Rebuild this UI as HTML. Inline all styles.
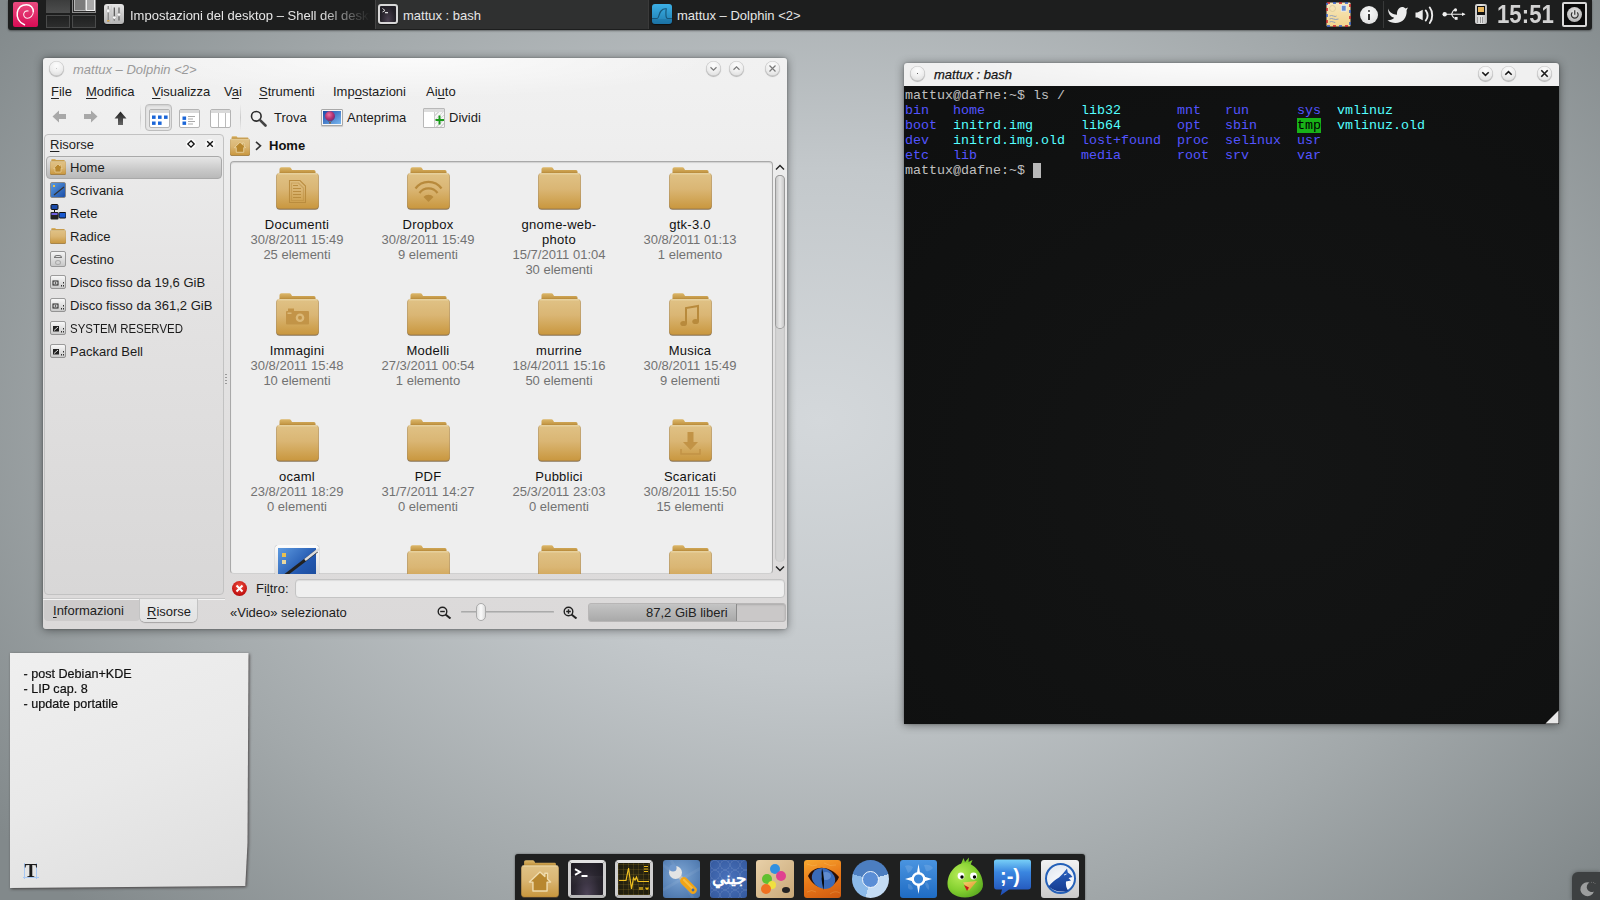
<!DOCTYPE html>
<html><head><meta charset="utf-8">
<style>
*{margin:0;padding:0;box-sizing:border-box}
html,body{width:1600px;height:900px;overflow:hidden}
body{position:relative;font-family:"Liberation Sans",sans-serif;font-size:13px;color:#222;
background:radial-gradient(ellipse 1000px 720px at 820px 420px,#d4d8db 0%,#c3c8cb 35%,#a2a8aa 70%,#82898b 100%);}
.a{position:absolute}
.t{position:absolute;white-space:nowrap;line-height:1}
/* panel */
#panel{left:8px;top:0;width:1584px;height:30px;background:#1d1e1e;border-radius:0 0 3px 3px;box-shadow:0 1px 2px rgba(0,0,0,.4)}
.ptxt{color:#e6e6e6;font-size:13px}
/* windows */
.win{position:absolute;background:#efefef;border-radius:3px 3px 2px 2px;box-shadow:0 1px 10px rgba(0,0,0,.45),0 0 2px rgba(0,0,0,.3)}
.wbtn{position:absolute;width:15px;height:15px;border-radius:50%;background:radial-gradient(circle at 50% 30%,#fdfdfd 0%,#f0f0f0 45%,#d6d6d6 100%);box-shadow:inset 0 0 0 .6px rgba(0,0,0,.18),0 .8px .8px rgba(0,0,0,.3)}
.menu span{position:absolute;top:0}
.m{color:#1c1c1c;line-height:15px}
.it{font-style:italic;line-height:15px}
.gi{position:absolute;width:120px;text-align:center;line-height:15px;color:#727272;white-space:nowrap}
.nm{color:#111;letter-spacing:.25px}
.di{position:absolute;top:6px;width:38px;height:38px;overflow:hidden}
.vic{position:absolute;width:21px;height:19px;border:1px solid #b4b4b4;border-radius:2px;background:#fff}
.vh{position:absolute;left:0;top:0;width:19px;height:3px;background:#dadada}
u{text-decoration:underline;text-decoration-thickness:1px;text-underline-offset:2px;text-decoration-color:#222}
</style></head><body>

<svg width="0" height="0" style="position:absolute">
<defs>
<linearGradient id="fb" x1="0" y1="0" x2="0" y2="1"><stop offset="0" stop-color="#e0c286"/><stop offset=".45" stop-color="#dab674"/><stop offset="1" stop-color="#c9973e"/></linearGradient>
<linearGradient id="ft" x1="0" y1="0" x2="0" y2="1"><stop offset="0" stop-color="#dcb76a"/><stop offset="1" stop-color="#b5842e"/></linearGradient>
<symbol id="folder" viewBox="0 0 43 43">
  <path d="M3.5 2 Q3.5 0.3 5.5 0.3 H13.5 Q15 0.3 15.5 2 L16 3 H38 Q39.5 3 39.5 4.5 V8 H3.5z" fill="url(#ft)"/>
  <rect x="0.3" y="6.8" width="42.4" height="36" rx="3.5" fill="#6a5030" opacity=".75"/>
  <rect x="0.3" y="6" width="42.4" height="35.8" rx="3.5" fill="url(#fb)" stroke="#9a7338" stroke-width=".4" stroke-opacity=".6"/>
  <rect x="1.5" y="6.3" width="40" height="1" fill="#f3e2b6" opacity=".8"/>
</symbol>
<symbol id="em-doc" viewBox="0 0 43 43"><g fill="none" stroke="#b88a3c" stroke-width="1.1" opacity=".9"><path d="M13.5 13.5 H24 L29.5 19 V35.5 H13.5z"/><path d="M15.5 16 H22.5 L27.5 21 V33.5 H15.5z" stroke-opacity=".5"/><path d="M17 21.5h8M17 24.5h8M17 27.5h8M17 30.5h8M17 18.5h5"/></g></symbol>
<symbol id="em-wifi" viewBox="0 0 43 43"><g fill="none" stroke="#b88a3c" stroke-width="2.2"><path d="M8.5 21.5 A16 16 0 0 1 34.5 21.5"/><path d="M12.5 26 A11 11 0 0 1 30.5 26"/></g><path d="M16.5 30 A6.5 6.5 0 0 1 26.5 30 L21.5 35z" fill="#b88a3c"/></symbol>
<symbol id="em-cam" viewBox="0 0 43 43"><g fill="#c29346" opacity=".95"><rect x="10" y="18" width="23" height="13.5" rx="1"/><rect x="12" y="15.5" width="6" height="3"/></g><circle cx="24" cy="24.8" r="4.3" fill="#dcb978"/><circle cx="24" cy="24.8" r="2" fill="#c29346"/><rect x="11.5" y="19.5" width="4" height="1.5" fill="#dcb978"/></symbol>
<symbol id="em-music" viewBox="0 0 43 43"><path d="M17 30.5 V15 L29 13 V28.5" fill="none" stroke="#b88a3c" stroke-width="2"/><ellipse cx="14.6" cy="30.5" rx="3.3" ry="2.6" fill="#b88a3c"/><ellipse cx="26.6" cy="28.5" rx="3.3" ry="2.6" fill="#b88a3c"/></symbol>
<symbol id="em-down" viewBox="0 0 43 43"><path d="M18.5 13 H24.5 V23 H29 L21.5 31 L14 23 H18.5z" fill="#c29346"/><path d="M12 30 V35 H31 V30" fill="none" stroke="#c29346" stroke-width="1.5"/></symbol>
<symbol id="em-home" viewBox="0 0 43 43"><path d="M21.5 13.5 L27 18.7 V15 H30 V21.5 L33.5 25 H29.5 V35 H13.5 V25 H9.5z" fill="#b8872e" stroke="#efdcae" stroke-width="1.6" stroke-linejoin="round"/></symbol>
<linearGradient id="blu" x1="0" y1="0" x2="1" y2="1"><stop offset="0" stop-color="#5d9ae0"/><stop offset="1" stop-color="#1c4fa8"/></linearGradient>
<linearGradient id="hdd" x1="0" y1="0" x2="0" y2="1"><stop offset="0" stop-color="#fafafa"/><stop offset="1" stop-color="#c8c8c8"/></linearGradient>
<symbol id="hdd16" viewBox="0 0 16 16"><rect x="0.5" y="2.5" width="15" height="13" rx="1.5" fill="url(#hdd)" stroke="#777" stroke-width=".7"/><rect x="3" y="8" width="5" height="4" fill="none" stroke="#222" stroke-width="1"/><circle cx="5.5" cy="10" r=".8" fill="#222"/><rect x="11" y="12" width="1" height="1.5" fill="#333"/><rect x="13" y="12" width="1" height="1.5" fill="#333"/><rect x="13" y="9" width="1" height="1.5" fill="#333"/></symbol>
<symbol id="ntfs16" viewBox="0 0 16 16"><rect x="0.5" y="2.5" width="15" height="13" rx="1.5" fill="url(#hdd)" stroke="#777" stroke-width=".7"/><rect x="3" y="7" width="6" height="5.5" fill="#222"/><path d="M4 11.5 L8 8" stroke="#ddd" stroke-width="1"/><rect x="11" y="12" width="1" height="1.5" fill="#333"/><rect x="13" y="12" width="1" height="1.5" fill="#333"/><rect x="13" y="9" width="1" height="1.5" fill="#333"/></symbol>
</defs></svg>
<!-- PANEL -->
<div id="panel" class="a">
  <!-- debian -->
  <div class="a" style="left:5px;top:2px;width:25px;height:25px;border-radius:2px;background:linear-gradient(#ea4c80,#d80c55)">
    <svg class="a" style="left:0;top:0" width="25" height="25" viewBox="0 0 25 25"><path d="M11.5 22.8 C5.5 20.5 3.5 15 4.3 10.5 C5.3 5 9.5 2.7 13.5 2.7 C17.8 2.7 20.3 6 20.3 9.5" fill="none" stroke="#fff" stroke-width="1.5" stroke-linecap="round"/><path d="M20.3 9.5 C20.3 13.5 17.5 16.5 14 16.2 C11.5 16 10.2 13.5 10.8 11.3 C11.4 9.5 13.2 8.6 15.2 9" fill="none" stroke="#fff" stroke-width="1.05" stroke-linecap="round" opacity=".9"/></svg>
  </div>
  <!-- pager -->
  <div class="a" style="left:38px;top:0;width:24px;height:13px;background:linear-gradient(#3c3d3d,#4d4e4e);"></div>
  <div class="a" style="left:64px;top:0;width:24px;height:13px;border:1px solid #8a8a8a;border-top:0;background:#2a2a2a">
    <div class="a" style="left:1px;top:0;width:12px;height:11px;background:#7c7c7c;border:1px solid #b5b5b5;border-top:0"></div>
    <div class="a" style="left:13px;top:0;width:9px;height:11px;background:#a9a9a9;border:1px solid #f0f0f0;border-top:0"></div>
  </div>
  <div class="a" style="left:38px;top:15px;width:24px;height:13px;border:1px solid #4a4b4b;background:linear-gradient(#202121,#2c2d2d)"></div>
  <div class="a" style="left:64px;top:15px;width:24px;height:13px;border:1px solid #4a4b4b;background:linear-gradient(#202121,#2c2d2d)"></div>
  <!-- task 1 -->
  <div class="a" style="left:96px;top:4px;width:20px;height:20px;border-radius:3px;background:linear-gradient(#e6e6e6,#b4b4b4);box-shadow:0 1px 1px rgba(0,0,0,.5)">
    <svg class="a" width="20" height="20" viewBox="0 0 20 20"><line x1="7.3" y1="1.5" x2="7.3" y2="18.5" stroke="#c4c4c4" stroke-width=".6"/><g stroke-width="1.1"><line x1="4.2" y1="2" x2="4.2" y2="18" stroke="#777"/><line x1="10.3" y1="3.5" x2="10.3" y2="16.5" stroke="#4a4a4a"/><line x1="15" y1="3.5" x2="15" y2="16.5" stroke="#5a5a5a"/></g><g fill="#fafafa" stroke="#9a9a9a" stroke-width=".4"><rect x="2.6" y="5.2" width="3.2" height="3.2" rx=".6"/><path d="M8.5 12.3 h3.6 v1.4 l-1.8 1.8 l-1.8 -1.8z"/><path d="M13.2 9.3 h3.6 v1.4 l-1.8 1.8 l-1.8 -1.8z"/></g><rect x="3" y="16" width="2.5" height="1.5" fill="#d8a850"/></svg>
  </div>
  <div class="t ptxt" style="left:122px;top:9px;width:240px;overflow:hidden;-webkit-mask-image:linear-gradient(90deg,#000 190px,transparent 240px)">Impostazioni del desktop – Shell del desktop</div>
  <!-- task 2 active -->
  <div class="a" style="left:367px;top:0;width:274px;height:29px;background:#2f3030;border-left:1px solid #444;border-right:1px solid #3a3a3a"></div>
  <div class="a" style="left:370px;top:4px;width:20px;height:20px;border-radius:3px;border:2px solid #d8d8d8;background:radial-gradient(ellipse at 50% 90%,#4a4050,#221f26 70%);box-shadow:0 1px 1px rgba(0,0,0,.6)">
    <svg class="a" style="left:0;top:0" width="16" height="16" viewBox="0 0 16 16"><path d="M2.5 2.5 L5 4.5 L2.5 6" fill="none" stroke="#ddd" stroke-width="1"/><rect x="5" y="6" width="3" height="1.3" fill="#ddd"/></svg>
  </div>
  <div class="t ptxt" style="left:395px;top:9px">mattux : bash</div>
  <!-- task 3 -->
  <div class="a" style="left:644px;top:4px;width:20px;height:20px;border-radius:3px;background:linear-gradient(#3cb0e6,#1f7db0);box-shadow:0 1px 1px rgba(0,0,0,.5)">
    <svg class="a" width="20" height="20" viewBox="0 0 20 20"><path d="M0 14.5 H5.2 C6.8 14.5 6.8 9.5 9 7 C10.5 5.2 12.5 4.6 14.2 4.8 C13.7 9 13.6 14.5 15.5 14.5 H20" fill="none" stroke="#17587c" stroke-width="1.2"/><rect x="0" y="15" width="20" height="5" fill="rgba(0,40,80,.12)"/></svg>
  </div>
  <div class="t ptxt" style="left:669px;top:9px">mattux – Dolphin &lt;2&gt;</div>
  <!-- tray -->
  <svg class="a" style="left:1318px;top:2px" width="25" height="25" viewBox="0 0 25 25"><defs><linearGradient id="env" x1="0" y1="0" x2="0" y2="1"><stop offset="0" stop-color="#f7e8c0"/><stop offset="1" stop-color="#f2d48c"/></linearGradient></defs><rect x="0.5" y="0.5" width="24" height="24" rx="1" fill="url(#env)"/><rect x="1" y="1" width="23" height="23" fill="none" stroke="#c81e2a" stroke-width="1.5" stroke-dasharray="3 9"/><rect x="1" y="1" width="23" height="23" fill="none" stroke="#2a58c8" stroke-width="1.5" stroke-dasharray="3 9" stroke-dashoffset="6"/><rect x="15" y="3" width="5.5" height="6.5" fill="#e8eef8"/><rect x="15.8" y="3.8" width="3.9" height="4.9" fill="#6a8ed0"/><circle cx="6.5" cy="6.5" r="3" fill="none" stroke="#d8c898" stroke-width=".8"/><g stroke="#7890c0" stroke-width=".8" fill="none"><path d="M3.5 14 q2 -1 4 0 t3 0"/><path d="M3.5 17 q2 -1 4 0 t5 0"/><path d="M3.5 20 q2 -1 4 0 t2 0"/></g></svg>
  <div class="a" style="left:1352px;top:6px;width:18px;height:18px;border-radius:50%;background:radial-gradient(circle at 50% 40%,#fafafa,#d8d8d8)">
    <div class="a" style="left:8px;top:4px;width:2.2px;height:2.2px;background:#333;border-radius:1px"></div>
    <div class="a" style="left:8px;top:7.5px;width:2.2px;height:6.5px;background:#333"></div>
  </div>
  <div class="a" style="left:1375px;top:1px;width:1px;height:27px;background:#383939"></div>
  <svg class="a" style="left:1379px;top:6px" width="22" height="18" viewBox="0 0 22 18"><path d="M1 2.5 C2.5 6.5 6 8.5 10 8.7 C9.7 4.8 11.8 1 15 1 C16.6 1 17.8 1.7 18.5 2.5 L21 1.5 L19.6 4.2 C20.3 11.5 15.5 17 8.5 17 C5.5 17 2.5 16 0.5 14.3 C3.5 14.5 6 13.3 7.2 11.8 C3.5 11 1 7.5 1 2.5z" fill="#ececec"/></svg>
  <svg class="a" style="left:1406px;top:6px" width="20" height="18" viewBox="0 0 20 18"><path d="M1.5 6.5 H3.5 L8.7 3.7 V14.3 L3.5 11.5 H1.5z" fill="#ececec"/><path d="M11.8 4.5 C14 7.5 14 11.5 11.8 14.5 M15.8 1.5 C19 5.5 19 13 15.8 17" fill="none" stroke="#ececec" stroke-width="1.9" stroke-linecap="round"/></svg>
  <svg class="a" style="left:1434px;top:8px" width="24" height="14" viewBox="0 0 24 14"><circle cx="2.7" cy="6.3" r="2.2" fill="#f0f0f0"/><path d="M2.7 6.3 H22.5 M9 6.3 C10.5 6.3 10.5 1.8 12.5 1.8 M9 6.3 C10.5 6.3 10.5 10.3 13 10.3" stroke="#f0f0f0" stroke-width="1.1" fill="none"/><path d="M20 4.5 L23.5 6.3 L20 8z" fill="#f0f0f0"/><circle cx="13.5" cy="1.9" r="1.6" fill="#f0f0f0"/><rect x="12.8" y="9" width="2.8" height="2.8" fill="#f0f0f0"/></svg>
  <div class="a" style="left:1467px;top:4px;width:12px;height:20px;border-radius:2px;background:linear-gradient(90deg,#c8c8c8,#e8e8e8,#b8b8b8);box-shadow:0 1px 1px rgba(0,0,0,.5)">
    <div class="a" style="left:2px;top:2px;width:8px;height:9px;background:#111"><div class="a" style="left:1px;top:1px;width:6px;height:4.5px;background:#eab860"></div></div>
    <div class="a" style="left:2px;top:13px;width:8px;height:6px;background:repeating-linear-gradient(90deg,#999 0 1px,transparent 1px 2.7px)"></div>
  </div>
  <div class="t" style="left:1489px;top:1px;font-size:26px;font-weight:bold;color:#d2d2d2;transform:scaleX(0.855);transform-origin:0 0;line-height:26px">15:51</div>
  <div class="a" style="left:1554px;top:2px;width:25px;height:25px;border:2px solid #d9d9d9;border-radius:2px;background:#0a0a0a">
    <div class="a" style="left:2.8px;top:2.5px;width:15.5px;height:15.5px;border-radius:50%;background:radial-gradient(circle at 50% 35%,#e4e4e4,#a8a8a8)">
      <svg class="a" width="15.5" height="15.5" viewBox="-.75 -.75 15.5 15.5"><path d="M4.6 4.6 A3.4 3.4 0 1 0 9.4 4.6" fill="none" stroke="#333" stroke-width="1.2"/><line x1="7" y1="2.5" x2="7" y2="7" stroke="#333" stroke-width="1.2"/></svg>
    </div>
  </div>
</div>

<!-- DOLPHIN -->
<div class="win" id="dol" style="left:43px;top:58px;width:744px;height:571px;border-radius:3px;background:linear-gradient(#f1f1f1 0,#eeeeee 90px,#e3e2e2 300px,#dbd9d9 571px)">
  <div class="a" style="left:0;top:0;width:744px;height:40px;background:radial-gradient(ellipse 300px 40px at 372px 0,rgba(255,255,255,.7),rgba(255,255,255,0))"></div>
  <div class="wbtn" style="left:6px;top:3px"><div class="a" style="left:7px;top:7px;width:1.4px;height:1.4px;background:#bbb;border-radius:1px"></div></div>
  <div class="t it" style="left:30px;top:4px;color:#9a9a9a">mattux – Dolphin &lt;2&gt;</div>
  <div class="wbtn" style="left:663px;top:3px"><svg class="a" width="15" height="15"><path d="M4.5 6.3 L7.5 9.2 L10.5 6.3" fill="none" stroke="#7a7a7a" stroke-width="1.2"/></svg></div>
  <div class="wbtn" style="left:686px;top:3px"><svg class="a" width="15" height="15"><path d="M4.5 8.7 L7.5 5.8 L10.5 8.7" fill="none" stroke="#7a7a7a" stroke-width="1.2"/></svg></div>
  <div class="wbtn" style="left:722px;top:3px"><svg class="a" width="15" height="15"><path d="M4.5 4.5 L10.5 10.5 M10.5 4.5 L4.5 10.5" fill="none" stroke="#7a7a7a" stroke-width="1.2"/></svg></div>
  <!-- menu -->
  <div class="t m" style="left:8px;top:26px"><u>F</u>ile</div>
  <div class="t m" style="left:43px;top:26px"><u>M</u>odifica</div>
  <div class="t m" style="left:109px;top:26px"><u>V</u>isualizza</div>
  <div class="t m" style="left:181px;top:26px">V<u>a</u>i</div>
  <div class="t m" style="left:216px;top:26px"><u>S</u>trumenti</div>
  <div class="t m" style="left:290px;top:26px">Imp<u>o</u>stazioni</div>
  <div class="t m" style="left:383px;top:26px">Ai<u>u</u>to</div>
  <!-- toolbar -->
  <svg class="a" style="left:9px;top:52px" width="15" height="13"><path d="M0.5 6.5 L7 0.5 V4 H14 V9 H7 V12.5z" fill="#a8a8a8"/></svg>
  <svg class="a" style="left:40px;top:52px" width="15" height="13"><path d="M14.5 6.5 L8 0.5 V4 H1 V9 H8 V12.5z" fill="#a8a8a8"/></svg>
  <svg class="a" style="left:71px;top:53px" width="13" height="15"><defs><linearGradient id="ug" x1="0" y1="0" x2="0" y2="1"><stop offset="0" stop-color="#222"/><stop offset="1" stop-color="#666"/></linearGradient></defs><path d="M6.5 0.5 L12.5 7.5 H9 V14 H4 V7.5 H0.5z" fill="url(#ug)"/></svg>
  <div class="a" style="left:97px;top:46px;width:1px;height:27px;background:linear-gradient(rgba(0,0,0,0),rgba(0,0,0,.15),rgba(0,0,0,0))"></div>
  <div class="a" style="left:102px;top:46px;width:27px;height:27px;border-radius:4px;border:1px solid #bdbdbd;background:#e6e6e6;box-shadow:inset 0 1px 2px rgba(0,0,0,.1)"></div>
  <div class="vic" style="left:106px;top:51px"><div class="vh"></div>
    <svg class="a" style="left:0;top:0" width="21" height="19"><g fill="#1b66d8"><rect x="2" y="5.5" width="3.6" height="3.4"/><rect x="8" y="5.5" width="3.6" height="3.4"/><rect x="14" y="5.5" width="3.6" height="3.4"/><rect x="2" y="11.5" width="3.6" height="3.4"/><rect x="8" y="11.5" width="3.6" height="3.4"/></g></svg></div>
  <div class="vic" style="left:136px;top:51px"><div class="vh"></div>
    <svg class="a" style="left:0;top:0" width="21" height="19"><g fill="#1b66d8"><rect x="2.5" y="6.5" width="3.6" height="3.4"/><rect x="2.5" y="11.5" width="3.6" height="3.4"/></g><g fill="#aaa"><rect x="8" y="6" width="7" height="1"/><rect x="8" y="8.5" width="5" height="1"/><rect x="8" y="11" width="7" height="1"/><rect x="8" y="13.5" width="5" height="1"/></g></svg></div>
  <div class="vic" style="left:167px;top:51px"><div class="vh"></div>
    <div class="a" style="left:7px;top:3px;width:1px;height:14px;background:#bbb"></div><div class="a" style="left:14px;top:3px;width:1px;height:14px;background:#bbb"></div></div>
  <div class="a" style="left:197px;top:46px;width:1px;height:27px;background:linear-gradient(rgba(0,0,0,0),rgba(0,0,0,.15),rgba(0,0,0,0))"></div>
  <svg class="a" style="left:207px;top:52px" width="18" height="17"><circle cx="6.3" cy="6.3" r="4.8" fill="none" stroke="#2a2a2a" stroke-width="1.6"/><path d="M9.8 9.8 L15.5 15.5" stroke="#444" stroke-width="2.6" stroke-linecap="round"/></svg>
  <div class="t m" style="left:231px;top:52px">Trova</div>
  <div class="a" style="left:278px;top:51px;width:22px;height:17px;border:1px solid #a8a8a8;border-radius:1px;background:#f8f8f8;box-shadow:0 1px 1px rgba(0,0,0,.15)">
    <svg class="a" style="left:1px;top:1px" width="18" height="13"><defs><linearGradient id="sky" x1="0" y1="0" x2="1" y2="1"><stop offset="0" stop-color="#1a4aa8"/><stop offset="1" stop-color="#7ab8f0"/></linearGradient><radialGradient id="bal" cx=".4" cy=".35" r=".7"><stop offset="0" stop-color="#f070a0"/><stop offset=".6" stop-color="#b03070"/><stop offset="1" stop-color="#603080"/></radialGradient></defs><rect width="18" height="13" fill="url(#sky)"/><ellipse cx="7" cy="5.3" rx="5" ry="5" fill="url(#bal)"/><path d="M5 9.5 L6.3 11 M9 9.5 L7.7 11" stroke="#444" stroke-width=".6"/><rect x="6.2" y="11" width="1.6" height="1.6" fill="#7a5a30"/></svg></div>
  <div class="t m" style="left:304px;top:52px">Anteprima</div>
  <div class="a" style="left:380px;top:50px;width:22px;height:20px;border:1px solid #b8b8b8;background:linear-gradient(90deg,#fff 50%,transparent 50%),repeating-linear-gradient(135deg,#d8d8d8 0 1px,#f6f6f6 1px 3px);border-radius:1px">
    <div class="a" style="left:0;top:0;width:20px;height:3px;background:#ddd"></div><div class="a" style="left:10px;top:3px;width:1px;height:15px;background:#ccc"></div>
    <svg class="a" style="left:11px;top:6px" width="10" height="10"><path d="M4.5 0.5 V9.5 M0.5 5 H9" stroke="#1a9a1a" stroke-width="2"/></svg></div>
  <div class="t m" style="left:406px;top:52px">Dividi</div>
  <!-- places -->
  <div class="a" style="left:1px;top:76px;width:180px;height:461px;border:1px solid #c2c2c2;border-radius:4px;background:linear-gradient(#ececec,#e4e3e3 150px,#d8d7d7)"></div>
  <div class="t m" style="left:7px;top:79px"><u>R</u>isorse</div>
  <div class="a" style="left:143px;top:81px;width:10px;height:10px;border-radius:50%;background:#fafafa"><svg class="a" width="10" height="10"><path d="M5 1.8 L8.2 5 L5 8.2 L1.8 5z" fill="none" stroke="#111" stroke-width="1.3"/></svg></div>
  <div class="a" style="left:162px;top:81px;width:10px;height:10px;border-radius:50%;background:#fafafa"><svg class="a" width="10" height="10"><path d="M2.2 2.2 L7.8 7.8 M7.8 2.2 L2.2 7.8" fill="none" stroke="#111" stroke-width="1.4"/></svg></div>
  <div class="a" style="left:3px;top:98px;width:176px;height:23px;border-radius:4px;border:1px solid #a9a9a9;background:linear-gradient(#e6e6e6,#c9c9c9 60%,#b9b9b9)"></div>
  <svg class="a" style="left:7px;top:101px" width="16" height="16" viewBox="0 0 43 43"><use href="#folder"/><use href="#em-home"/></svg>
  <div class="a" style="left:7px;top:124px;width:16px;height:16px;border-radius:2px;border:1px solid #888;background:linear-gradient(135deg,#5a9ae0,#1c4fa8)"><div class="a" style="left:2px;top:2px;width:2px;height:2px;background:#e8c050"></div><svg class="a" width="16" height="16"><path d="M3 12 L13 4" stroke="#333" stroke-width="1.3"/></svg></div>
  <svg class="a" style="left:7px;top:146px" width="16" height="16"><rect x="1" y="0.5" width="7" height="5" rx="1" fill="#1a4aa8" stroke="#111"/><rect x="0.5" y="8" width="8" height="7.5" rx="1" fill="#222"/><rect x="1.5" y="9" width="6" height="2" fill="#7060e0"/><rect x="9" y="8.5" width="7" height="5.5" rx="1" fill="#1a5ad0" stroke="#111"/><rect x="4" y="5.5" width="1" height="2.5" fill="#111"/></svg>
  <svg class="a" style="left:7px;top:170px" width="16" height="16" viewBox="0 0 43 43"><use href="#folder"/></svg>
  <div class="a" style="left:7px;top:193px;width:16px;height:16px;border-radius:2px;border:1px solid #999;background:linear-gradient(#f4f4f4,#c8c8c8)"><div class="a" style="left:3px;top:3px;width:8px;height:3px;border:1px solid #777;border-radius:4px 4px 0 0"></div><div class="a" style="left:4px;top:8px;width:6px;height:5px;border-radius:50%;border:1px solid #aaa"></div></div>
  <svg class="a" style="left:7px;top:215px" width="16" height="16"><use href="#hdd16"/></svg>
  <svg class="a" style="left:7px;top:238px" width="16" height="16"><use href="#hdd16"/></svg>
  <svg class="a" style="left:7px;top:261px" width="16" height="16"><use href="#ntfs16"/></svg>
  <svg class="a" style="left:7px;top:284px" width="16" height="16"><use href="#ntfs16"/></svg>
  <div class="t m" style="left:27px;top:102px">Home</div>
  <div class="t m" style="left:27px;top:125px">Scrivania</div>
  <div class="t m" style="left:27px;top:148px">Rete</div>
  <div class="t m" style="left:27px;top:171px">Radice</div>
  <div class="t m" style="left:27px;top:194px">Cestino</div>
  <div class="t m" style="left:27px;top:217px">Disco fisso da 19,6 GiB</div>
  <div class="t m" style="left:27px;top:240px">Disco fisso da 361,2 GiB</div>
  <div class="t m" style="left:27px;top:263px;transform:scaleX(.88);transform-origin:0 0">SYSTEM RESERVED</div>
  <div class="t m" style="left:27px;top:286px">Packard Bell</div>
  <div class="a" style="left:182px;top:316px;width:2px;height:12px;background:repeating-linear-gradient(#999 0 1px,transparent 1px 3px)"></div>
  <!-- breadcrumb -->
  <svg class="a" style="left:187px;top:78px" width="20" height="20" viewBox="0 0 43 43"><use href="#folder"/><use href="#em-home"/></svg>
  <svg class="a" style="left:212px;top:83px" width="7" height="10"><path d="M1 0.8 L5.5 4.8 L1 8.8" fill="none" stroke="#333" stroke-width="1.6"/></svg>
  <div class="t m" style="left:226px;top:80px;font-weight:bold;color:#111">Home</div>
  <!-- view -->
  <div class="a" style="left:187px;top:103px;width:543px;height:413px;border:1px solid #a9a9a9;border-bottom-color:#d0d0d0;border-radius:4px;background:#eeeeee;box-shadow:inset 0 1px 1px rgba(0,0,0,.12);overflow:hidden"></div>
  <div class="a" style="left:0;top:0;width:744px;height:571px">
  <svg class="a" style="left:232.5px;top:109px" width="43" height="43"><use href="#folder"/><use href="#em-doc"/></svg><div class="gi" style="left:194px;top:159px"><span class="nm">Documenti</span><br>30/8/2011 15:49<br>25 elementi</div>
<svg class="a" style="left:363.5px;top:109px" width="43" height="43"><use href="#folder"/><use href="#em-wifi"/></svg><div class="gi" style="left:325px;top:159px"><span class="nm">Dropbox</span><br>30/8/2011 15:49<br>9 elementi</div>
<svg class="a" style="left:494.5px;top:109px" width="43" height="43"><use href="#folder"/></svg><div class="gi" style="left:456px;top:159px"><span class="nm">gnome-web-</span><br><span class="nm">photo</span><br>15/7/2011 01:04<br>30 elementi</div>
<svg class="a" style="left:625.5px;top:109px" width="43" height="43"><use href="#folder"/></svg><div class="gi" style="left:587px;top:159px"><span class="nm">gtk-3.0</span><br>30/8/2011 01:13<br>1 elemento</div>
<svg class="a" style="left:232.5px;top:235px" width="43" height="43"><use href="#folder"/><use href="#em-cam"/></svg><div class="gi" style="left:194px;top:285px"><span class="nm">Immagini</span><br>30/8/2011 15:48<br>10 elementi</div>
<svg class="a" style="left:363.5px;top:235px" width="43" height="43"><use href="#folder"/></svg><div class="gi" style="left:325px;top:285px"><span class="nm">Modelli</span><br>27/3/2011 00:54<br>1 elemento</div>
<svg class="a" style="left:494.5px;top:235px" width="43" height="43"><use href="#folder"/></svg><div class="gi" style="left:456px;top:285px"><span class="nm">murrine</span><br>18/4/2011 15:16<br>50 elementi</div>
<svg class="a" style="left:625.5px;top:235px" width="43" height="43"><use href="#folder"/><use href="#em-music"/></svg><div class="gi" style="left:587px;top:285px"><span class="nm">Musica</span><br>30/8/2011 15:49<br>9 elementi</div>
<svg class="a" style="left:232.5px;top:361px" width="43" height="43"><use href="#folder"/></svg><div class="gi" style="left:194px;top:411px"><span class="nm">ocaml</span><br>23/8/2011 18:29<br>0 elementi</div>
<svg class="a" style="left:363.5px;top:361px" width="43" height="43"><use href="#folder"/></svg><div class="gi" style="left:325px;top:411px"><span class="nm">PDF</span><br>31/7/2011 14:27<br>0 elementi</div>
<svg class="a" style="left:494.5px;top:361px" width="43" height="43"><use href="#folder"/></svg><div class="gi" style="left:456px;top:411px"><span class="nm">Pubblici</span><br>25/3/2011 23:03<br>0 elementi</div>
<svg class="a" style="left:625.5px;top:361px" width="43" height="43"><use href="#folder"/><use href="#em-down"/></svg><div class="gi" style="left:587px;top:411px"><span class="nm">Scaricati</span><br>30/8/2011 15:50<br>15 elementi</div>
<div class="a" style="left:0;top:487px;width:742px;height:29px;overflow:hidden"><div class="a" style="left:232px;top:0;width:44px;height:40px;border-radius:4px;background:linear-gradient(#fdfdfd,#d0d0d0);box-shadow:0 0 1px rgba(0,0,0,.6)">
<div class="a" style="left:3px;top:3px;width:38px;height:34px;background:linear-gradient(135deg,#5e9be0,#2358b0 60%,#1a4a98)"><div class="a" style="left:4px;top:5px;width:4px;height:4px;background:#e8c050"></div><div class="a" style="left:4px;top:12px;width:4px;height:4px;background:#e8d8a0"></div></div>
<svg class="a" style="left:0;top:0" width="50" height="40"><path d="M8 32 L42 6" stroke="#222" stroke-width="3"/><path d="M30 15 L44 4" stroke="#ddd" stroke-width="2.5"/></svg></div><svg class="a" style="left:363.5px;top:0px" width="43" height="43"><use href="#folder"/></svg><svg class="a" style="left:494.5px;top:0px" width="43" height="43"><use href="#folder"/></svg><svg class="a" style="left:625.5px;top:0px" width="43" height="43"><use href="#folder"/></svg></div>
  </div>
  <!-- scrollbar -->
  <svg class="a" style="left:732px;top:106px" width="10" height="7"><path d="M1 5.5 L5 1.5 L9 5.5" fill="none" stroke="#222" stroke-width="1.4"/></svg>
  <div class="a" style="left:732px;top:117px;width:10px;height:387px;border-radius:5px;background:#d4d4d4;box-shadow:inset 0 1px 2px rgba(0,0,0,.25)"></div>
  <div class="a" style="left:733px;top:118px;width:8px;height:152px;border-radius:4px;background:linear-gradient(90deg,#c8c8c8,#e8e8e8,#c8c8c8);box-shadow:0 0 0 1px #9a9a9a"></div>
  <svg class="a" style="left:732px;top:507px" width="10" height="7"><path d="M1 1.5 L5 5.5 L9 1.5" fill="none" stroke="#222" stroke-width="1.4"/></svg>
  <!-- filter -->
  <div class="a" style="left:189px;top:523px;width:15px;height:15px;border-radius:50%;background:radial-gradient(circle at 50% 35%,#f05040,#c01010 70%,#901010)"><svg class="a" width="15" height="15"><path d="M4.5 4.5 L10.5 10.5 M10.5 4.5 L4.5 10.5" stroke="#fff" stroke-width="2"/></svg></div>
  <div class="t m" style="left:213px;top:523px">Fi<u>l</u>tro:</div>
  <div class="a" style="left:252px;top:521px;width:490px;height:19px;border-radius:4px;border:1px solid #c4c4c4;background:#efefef;box-shadow:inset 0 1px 1px rgba(0,0,0,.08)"></div>
  <!-- status -->
  <div class="t m" style="left:187px;top:547px">«Video» selezionato</div>
  <svg class="a" style="left:394px;top:548px" width="16" height="13"><circle cx="5.5" cy="5.5" r="4.3" fill="none" stroke="#222" stroke-width="1.4"/><path d="M3.2 5.5 H7.8" stroke="#222" stroke-width="1.4"/><path d="M8.5 8.5 L13.5 12.5" stroke="#222" stroke-width="2"/></svg>
  <div class="a" style="left:418px;top:553px;width:93px;height:2px;border-radius:1px;background:#c0c0c0;box-shadow:inset 0 1px 0 #aaa"></div>
  <div class="a" style="left:433px;top:545px;width:10px;height:18px;border-radius:5px;border:1px solid #aaa;background:linear-gradient(90deg,#e0e0e0,#fafafa,#dcdcdc)"></div>
  <svg class="a" style="left:520px;top:548px" width="16" height="13"><circle cx="5.5" cy="5.5" r="4.3" fill="none" stroke="#222" stroke-width="1.4"/><path d="M3.2 5.5 H7.8 M5.5 3.2 V7.8" stroke="#222" stroke-width="1.4"/><path d="M8.5 8.5 L13.5 12.5" stroke="#222" stroke-width="2"/></svg>
  <div class="a" style="left:545px;top:545px;width:198px;height:19px;border-radius:3px;border:1px solid #b8b6b6;background:#cac8c8;box-shadow:inset 0 1px 2px rgba(0,0,0,.15);overflow:hidden">
    <div class="a" style="left:0;top:0;width:148px;height:17px;background:linear-gradient(#c4c4c4,#a9a9a9);border-right:1px solid #8a8a8a"></div></div>
  <div class="t m" style="left:603px;top:547px;color:#222">87,2 GiB liberi</div>
  <!-- tabs -->
  <div class="a" style="left:0;top:541px;width:182px;height:1px;background:#f4f4f4;box-shadow:0 -1px 0 #c8c8c8"></div>
  <div class="a" style="left:1px;top:542px;width:96px;height:21px;border-radius:0 0 4px 4px;background:#cdcbcb"></div>
  <div class="a" style="left:97px;top:541px;width:57px;height:23px;border-radius:0 0 5px 5px;background:linear-gradient(#eaeaea,#e2e2e2);box-shadow:0 1px 1px rgba(0,0,0,.25),-1px 0 0 #c8c8c8,1px 0 0 #c8c8c8"></div>
  <div class="t m" style="left:10px;top:545px"><u>I</u>nformazioni</div>
  <div class="t m" style="left:104px;top:546px"><u>R</u>isorse</div>
</div>

<!-- TERMINAL -->
<div class="win" style="left:904px;top:63px;width:655px;height:661px;background:#f0f0f0;border-radius:3px 3px 0 0">
  <div class="a" style="left:0;top:0;width:655px;height:23px;background:radial-gradient(ellipse 300px 30px at 327px 0,rgba(255,255,255,.8),rgba(255,255,255,0))"></div>
  <div class="wbtn" style="left:6px;top:3px"><div class="a" style="left:7px;top:7px;width:1.4px;height:1.4px;background:#333;border-radius:1px"></div></div>
  <div class="t it" style="left:30px;top:4px;color:#151515;-webkit-text-stroke:.25px #151515">mattux : bash</div>
  <div class="wbtn" style="left:574px;top:3px"><svg class="a" width="15" height="15"><path d="M4.3 6.2 L7.5 9.3 L10.7 6.2" fill="none" stroke="#1a1a1a" stroke-width="1.6"/></svg></div>
  <div class="wbtn" style="left:597px;top:3px"><svg class="a" width="15" height="15"><path d="M4.3 8.8 L7.5 5.7 L10.7 8.8" fill="none" stroke="#1a1a1a" stroke-width="1.6"/></svg></div>
  <div class="wbtn" style="left:633px;top:3px"><svg class="a" width="15" height="15"><path d="M4.3 4.3 L10.7 10.7 M10.7 4.3 L4.3 10.7" fill="none" stroke="#1a1a1a" stroke-width="1.6"/></svg></div>
  <div class="a" style="left:0;top:23px;width:655px;height:638px;background:radial-gradient(ellipse 500px 450px at 55% 60%,#141515,#0f1010);overflow:hidden">
    <pre class="a" style="left:1px;top:2px;font-family:'Liberation Mono',monospace;font-size:13.333px;line-height:15px;color:#c0c0c0"><span style="color:#c0c0c0">mattux@dafne:~$ ls /</span>
<span style="color:#5454ff">bin</span>   <span style="color:#5454ff">home</span>            <span style="color:#54ffff">lib32</span>       <span style="color:#5454ff">mnt</span>   <span style="color:#5454ff">run</span>      <span style="color:#5454ff">sys</span>  <span style="color:#54ffff">vmlinuz</span>
<span style="color:#5454ff">boot</span>  <span style="color:#54ffff">initrd.img</span>      <span style="color:#54ffff">lib64</span>       <span style="color:#5454ff">opt</span>   <span style="color:#5454ff">sbin</span>     <span style="background:#18b218;color:#000">tmp</span>  <span style="color:#54ffff">vmlinuz.old</span>
<span style="color:#5454ff">dev</span>   <span style="color:#54ffff">initrd.img.old</span>  <span style="color:#5454ff">lost+found</span>  <span style="color:#5454ff">proc</span>  <span style="color:#5454ff">selinux</span>  <span style="color:#5454ff">usr</span>
<span style="color:#5454ff">etc</span>   <span style="color:#5454ff">lib</span>             <span style="color:#5454ff">media</span>       <span style="color:#5454ff">root</span>  <span style="color:#5454ff">srv</span>      <span style="color:#5454ff">var</span>
<span style="color:#c0c0c0">mattux@dafne:~$ </span><span style="background:#b8b8b8">&nbsp;</span></pre>
    <svg class="a" style="left:641px;top:624px" width="14" height="14"><path d="M13.5 0.5 V13.5 H0.5z" fill="#e8e8e8"/></svg>
  </div>
</div>

<!-- NOTE -->
<div class="a" style="left:0;top:640px;width:270px;height:260px;filter:drop-shadow(1px 1px 1.5px rgba(40,30,30,.7))"><div class="a" style="left:10px;top:13px;width:239px;height:235px;clip-path:polygon(0 0,238.5px 0,237.5px 190px,235.3px 233px,0 235px);background:linear-gradient(160deg,#efefef 0%,#e9e9e9 50%,#dedede 100%)">
  <div class="t" style="left:13.5px;top:14.2px;font-size:12.6px;line-height:15px;color:#111;-webkit-text-stroke:.2px #111">- post Debian+KDE<br>- LIP cap. 8<br>- update portatile</div>
  <div class="a" style="left:14px;top:210px;width:13px;height:16px;border:1px solid #a8c8f4;border-top:0;border-bottom:0"></div>
  <div class="a" style="left:13px;top:224px;width:16px;height:1px;background:#a8c8f4"></div>
  <div class="t" style="left:14.5px;top:208.7px;font-family:'Liberation Serif',serif;font-weight:bold;font-size:19px;line-height:18px;color:#1a1a1a">T</div>
</div></div>

<!-- DOCK -->
<div class="a" style="left:515px;top:854px;width:570px;height:46px;background:#1f2020;border-radius:3px 3px 0 0;box-shadow:0 0 2px rgba(0,0,0,.5)">
  <!-- home folder -->
  <svg class="a" style="left:6px;top:6px" width="38" height="38" viewBox="0 0 43 43"><use href="#folder"/><use href="#em-home"/></svg>
  <!-- terminal -->
  <div class="di" style="left:53px;border:3px solid #d2d2d2;border-color:#e2e2e2 #cfcfcf #b8b8b8;background:radial-gradient(ellipse at 50% 100%,#4e4458,#2a2630 55%,#1c1a20);border-radius:4px;box-shadow:0 1px 1px rgba(0,0,0,.6)"><div class="a" style="left:0;top:13px;width:32px;height:20px;background:linear-gradient(170deg,rgba(255,255,255,.06),rgba(255,255,255,0) 40%)"></div><svg class="a" style="left:3px;top:5px" width="16" height="10"><path d="M1 1.2 L6 4 L1 6.8" fill="none" stroke="#fff" stroke-width="1.9"/><rect x="7.5" y="7" width="6" height="2" fill="#fff"/></svg></div>
  <!-- ksysguard -->
  <div class="di" style="left:100px;border:3px solid #d2d2d2;border-color:#e2e2e2 #cfcfcf #b8b8b8;border-radius:4px;background:repeating-linear-gradient(90deg,rgba(200,160,40,.16) 0 1px,transparent 1px 5px),repeating-linear-gradient(0deg,rgba(200,160,40,.16) 0 1px,transparent 1px 5px),radial-gradient(circle,#2e2a14,#1c1a0c);box-shadow:0 1px 1px rgba(0,0,0,.6)">
    <svg class="a" width="32" height="32"><path d="M1 17.5 H8 L10.5 5 L13.5 26 L15.5 15 L17 17 L18.5 14 L20 18.5 H31" fill="none" stroke="#f0c020" stroke-width="1.2"/><rect x="26" y="3" width="4" height="1" fill="#e8b818"/><rect x="26" y="5.5" width="4" height="1" fill="#e8b818"/><rect x="26" y="8" width="4" height="1" fill="#e8b818"/><path d="M27 25 q1 -1.3 2 0 q1 -1.3 2 0 l-2 2.3z" fill="#e8b818"/><rect x="21" y="24" width="4" height="3" fill="#a88818"/></svg></div>
  <!-- systemsettings -->
  <div class="di" style="left:148px;width:37px;border-radius:3px;background:radial-gradient(circle at 45% 40%,#7ea6d4,#5a84b8 60%,#456ea4)">
    <svg class="a" width="38" height="38"><g stroke="rgba(255,255,255,.06)" stroke-width="3"><path d="M19 19 L0 5 M19 19 L8 0 M19 19 L38 8 M19 19 L30 38 M19 19 L0 30"/></g><path d="M16 16 L21 21" stroke="#bdbdbd" stroke-width="4"/><circle cx="12.5" cy="12.5" r="6.5" fill="#e4e4e4"/><circle cx="10" cy="8" r="3.6" fill="#7098cc"/><path d="M21 21 L30 30" stroke="#f0a418" stroke-width="7.5" stroke-linecap="round"/><path d="M21 20 L29.5 28.5" stroke="#fcc850" stroke-width="2" stroke-linecap="round" opacity=".7"/><circle cx="30" cy="30" r="1.4" fill="#3a68a8"/></svg></div>
  <!-- genius arabic -->
  <div class="di" style="left:195px;width:37px;border-radius:3px;background:radial-gradient(circle at 50% 50%,transparent 0 4px,rgba(255,255,255,.09) 4px 5px,transparent 5px) 0 0/10px 10px,radial-gradient(circle at 50% 50%,#4a72bc,#34599e)"><div class="t" style="left:2px;top:8px;color:#fff;font:bold 17px 'Liberation Serif',serif">جيني</div></div>
  <!-- kolourpaint -->
  <div class="di" style="left:241px;border-radius:3px;background:linear-gradient(135deg,#e8d0a8,#c8a878)">
    <svg class="a" width="38" height="38"><circle cx="19" cy="9" r="5" fill="#3090e0"/><circle cx="25" cy="16" r="5" fill="#e04090"/><circle cx="11" cy="19" r="5" fill="#60c030"/><circle cx="16" cy="25" r="4" fill="#f0e040"/><circle cx="10" cy="29" r="5" fill="#f07020"/><ellipse cx="30" cy="30" rx="4" ry="3" fill="#222"/></svg></div>
  <!-- tiger eye -->
  <div class="di" style="left:289px;width:37px;border-radius:3px;background:linear-gradient(160deg,#f8a830,#e87818 50%,#d05a10)">
    <svg class="a" width="38" height="38"><g stroke="rgba(255,230,160,.25)" stroke-width=".8" fill="none"><path d="M3 4 q6 3 10 1 M20 3 q6 4 12 2 M3 32 q5 -3 9 0 M26 34 q5 -4 10 -1"/></g><path d="M4 16 C9 6 24 4 35 17 C30 30 12 33 4 16z" fill="#2a0e05"/><ellipse cx="19.5" cy="18.5" rx="12" ry="10" transform="rotate(25 19.5 18.5)" fill="#3a6ab8"/><ellipse cx="22" cy="16" rx="5" ry="4" fill="#7aa4e0" opacity=".6"/><path d="M18 8 Q21 18 19.5 30 Q16.5 18 18 8z" fill="#080808"/></svg></div>
  <!-- chromium -->
  <div class="di" style="left:337px;width:37px;height:38px;border-radius:50%;background:conic-gradient(from 285deg,#4c7ec0 0 150deg,#c4dcf4 150deg 270deg,#8cbae8 270deg 360deg)"><div class="a" style="left:10px;top:10.5px;width:17px;height:17px;border-radius:50%;background:#5a8ed6;border:1.7px solid #eef4fb"></div></div>
  <!-- marble -->
  <div class="di" style="left:385px;width:37px;border-radius:3px;background:linear-gradient(#4a94e0,#1f6cc4)">
    <svg class="a" width="37" height="38"><g fill="rgba(255,255,255,.13)"><path d="M5 6 q4 -2 8 1 q-2 5 -5 6z M24 5 q6 -1 9 3 q-3 4 -7 3z M26 22 q4 2 3 8 q-3 -2 -4 -6z M8 24 q4 0 5 5 q-3 2 -5 -1z"/></g><path d="M18.5 4 L20.5 15.5 L32 19 L20.5 22.5 L18.5 34 L16.5 22.5 L5 19 L16.5 15.5z" fill="#fff"/><circle cx="18.5" cy="19" r="5.8" fill="#3a86d8" stroke="#fff" stroke-width="2.4"/></svg></div>
  <!-- choqok bird -->
  <svg class="a" style="left:429px;top:2px" width="42" height="43"><defs><radialGradient id="bird" cx=".35" cy=".35" r=".75"><stop offset="0" stop-color="#b8ec58"/><stop offset=".6" stop-color="#84d030"/><stop offset="1" stop-color="#5aa820"/></radialGradient><linearGradient id="beak" x1="0" y1="0" x2="1" y2="1"><stop offset="0" stop-color="#f6d070"/><stop offset="1" stop-color="#e09028"/></linearGradient></defs><path d="M17 8 L19.5 2 L21 6 L25 1.5 L24.5 6 L28.5 4 L26.5 9z" fill="#7cc830"/><path d="M21 7 C30 7 38.5 17 39 28 C39.5 36 31 41.5 21 41.5 C11 41.5 3.5 36 3.5 28 C3.5 17 12 7 21 7z" fill="url(#bird)"/><circle cx="17" cy="20" r="3.4" fill="#fff"/><circle cx="29.5" cy="20" r="3.4" fill="#fff"/><circle cx="18" cy="21" r="1.7" fill="#000"/><circle cx="30.5" cy="21" r="1.7" fill="#000"/><path d="M19 26.5 L33 25 L25 34.5z" fill="url(#beak)"/><path d="M20 29 L25 31.5 L23 35z" fill="#c81818"/></svg>
  <!-- kopete -->
  <svg class="a" style="left:478px;top:5px" width="40" height="41"><defs><linearGradient id="kop" x1="0" y1="0" x2="0" y2="1"><stop offset="0" stop-color="#78d0f8"/><stop offset=".35" stop-color="#3a86e0"/><stop offset="1" stop-color="#1f4cb4"/></linearGradient></defs><path d="M1 2.5 Q1 0.5 3.5 0.5 H35.5 Q38 0.5 38 3 V27.5 Q38 30.5 35 30.5 H16 L7.5 36.5 L9 30.5 H3.5 Q1 30.5 1 27.5z" fill="url(#kop)"/><text x="7" y="24" font-family="Liberation Sans" font-weight="bold" font-size="20" fill="#fff">;-)</text></svg>
  <!-- amarok -->
  <div class="di" style="left:526px;border-radius:3px;background:linear-gradient(#f2f2f2,#cacaca)"><div class="a" style="left:3.5px;top:3px;width:31px;height:31px;border-radius:50%;border:2px solid #2460b8;background:radial-gradient(circle at 60% 70%,#fff,#dde4ee)"><svg class="a" width="27" height="27"><defs><linearGradient id="wolf" x1="0" y1="0" x2="0" y2="1"><stop offset="0" stop-color="#2a62c0"/><stop offset="1" stop-color="#163c90"/></linearGradient></defs><path d="M1.5 21.5 C5 17 9 14.5 12 12.5 L16 8.5 L20 3.5 L20.8 7.5 L23.5 9.5 L25.5 12 L21.5 13 L24 15.5 L19 16.5 C18.5 20 19.5 23.5 21.5 26 C17 27 11 27 6 24.5z" fill="url(#wolf)"/><path d="M17 10 L19.5 9" stroke="#dfe8f8" stroke-width="1"/></svg></div></div>
</div>
<!-- cashew -->
<div class="a" style="left:1572px;top:872px;width:28px;height:28px;background:#3d4041;border-radius:6px 0 0 0;box-shadow:0 0 4px rgba(0,0,0,.35)">
  <svg class="a" width="28" height="28"><path d="M17.5 10.5 A7 7 0 1 0 22 19.5 A5 5 0 0 1 17.5 10.5z" fill="#9c9e9e"/><g fill="#777"><circle cx="19.5" cy="10.2" r=".5"/><circle cx="21.5" cy="10.5" r=".5"/><circle cx="23" cy="11.5" r=".5"/></g></svg>
</div>

</body></html>
